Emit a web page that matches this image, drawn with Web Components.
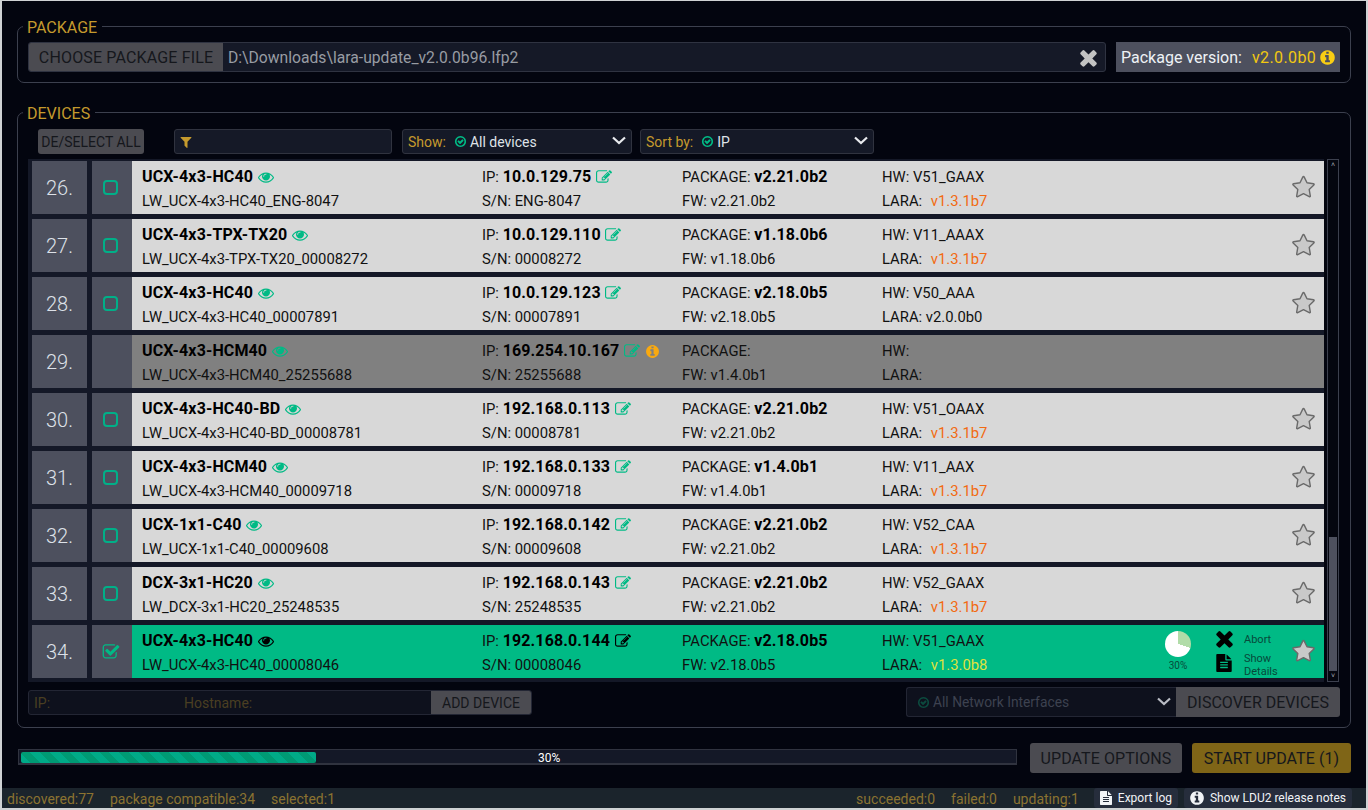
<!DOCTYPE html>
<html>
<head>
<meta charset="utf-8">
<title>LDU2</title>
<style>
html,body{margin:0;padding:0;height:100%;background:#cfd2d4;overflow:hidden}
body{font-family:Roboto,"Liberation Sans",sans-serif;font-size:14px;color:#000}
</style>
</head>
<body>
<lw-app>
  <lw-panel label="PACKAGE" slot="package">
    <lw-package-bar path="D:\Downloads\lara-update_v2.0.0b96.lfp2" version="v2.0.0b0"></lw-package-bar>
  </lw-panel>
  <lw-panel label="DEVICES" slot="devices" class="big">
    <lw-toolbar></lw-toolbar>
    <lw-device-list>
      <lw-device n="26." name="UCX-4x3-HC40" host="LW_UCX-4x3-HC40_ENG-8047" ip="10.0.129.75" sn="ENG-8047" pkg="v2.21.0b2" fw="v2.21.0b2" hw="V51_GAAX" lara="v1.3.1b7"></lw-device>
      <lw-device n="27." name="UCX-4x3-TPX-TX20" host="LW_UCX-4x3-TPX-TX20_00008272" ip="10.0.129.110" sn="00008272" pkg="v1.18.0b6" fw="v1.18.0b6" hw="V11_AAAX" lara="v1.3.1b7"></lw-device>
      <lw-device n="28." name="UCX-4x3-HC40" host="LW_UCX-4x3-HC40_00007891" ip="10.0.129.123" sn="00007891" pkg="v2.18.0b5" fw="v2.18.0b5" hw="V50_AAA" lara="v2.0.0b0" lara-ok></lw-device>
      <lw-device n="29." name="UCX-4x3-HCM40" host="LW_UCX-4x3-HCM40_25255688" ip="169.254.10.167" sn="25255688" fw="v1.4.0b1" state="off"></lw-device>
      <lw-device n="30." name="UCX-4x3-HC40-BD" host="LW_UCX-4x3-HC40-BD_00008781" ip="192.168.0.113" sn="00008781" pkg="v2.21.0b2" fw="v2.21.0b2" hw="V51_OAAX" lara="v1.3.1b7"></lw-device>
      <lw-device n="31." name="UCX-4x3-HCM40" host="LW_UCX-4x3-HCM40_00009718" ip="192.168.0.133" sn="00009718" pkg="v1.4.0b1" fw="v1.4.0b1" hw="V11_AAX" lara="v1.3.1b7"></lw-device>
      <lw-device n="32." name="UCX-1x1-C40" host="LW_UCX-1x1-C40_00009608" ip="192.168.0.142" sn="00009608" pkg="v2.21.0b2" fw="v2.21.0b2" hw="V52_CAA" lara="v1.3.1b7"></lw-device>
      <lw-device n="33." name="DCX-3x1-HC20" host="LW_DCX-3x1-HC20_25248535" ip="192.168.0.143" sn="25248535" pkg="v2.21.0b2" fw="v2.21.0b2" hw="V52_GAAX" lara="v1.3.1b7"></lw-device>
      <lw-device n="34." name="UCX-4x3-HC40" host="LW_UCX-4x3-HC40_00008046" ip="192.168.0.144" sn="00008046" pkg="v2.18.0b5" fw="v2.18.0b5" hw="V51_GAAX" lara="v1.3.0b8" state="updating"></lw-device>
    </lw-device-list>
    <lw-add-row></lw-add-row>
  </lw-panel>
  <lw-update-bar slot="update" percent="30"></lw-update-bar>
  <lw-status slot="status"></lw-status>
</lw-app>

<script>
const ICONS = {
  times: 'M1490 1322q0 40-28 68l-136 136q-28 28-68 28t-68-28l-294-294-294 294q-28 28-68 28t-68-28l-136-136q-28-28-28-68t28-68l294-294-294-294q-28-28-28-68t28-68l136-136q28-28 68-28t68 28l294 294 294-294q28-28 68-28t68 28l136 136q28 28 28 68t-28 68l-294 294 294 294q28 28 28 68z',
  info: 'M1152 1376v-160q0-14-9-23t-23-9h-96v-512q0-14-9-23t-23-9h-320q-14 0-23 9t-9 23v160q0 14 9 23t23 9h96v320h-96q-14 0-23 9t-9 23v160q0 14 9 23t23 9h448q14 0 23-9t9-23zm-128-896v-160q0-14-9-23t-23-9h-192q-14 0-23 9t-9 23v160q0 14 9 23t23 9h192q14 0 23-9t9-23zm640 416q0 209-103 385.5t-279.5 279.5-385.5 103-385.5-103-279.5-279.5-103-385.5 103-385.5 279.5-279.5 385.5-103 385.5 103 279.5 279.5 103 385.5z',
  eye: 'M1664 960q-152-236-381-353 61 104 61 225 0 185-131.5 316.5t-316.5 131.5-316.5-131.5-131.5-316.5q0-121 61-225-229 117-381 353 133 205 333.5 326.5t434.5 121.5 434.5-121.5 333.5-326.5zm-720-384q0-20-14-34t-34-14q-125 0-214.5 89.5t-89.5 214.5q0 20 14 34t34 14 34-14 14-34q0-86 61-147t147-61q20 0 34-14t14-34zm848 384q0 34-20 69-140 230-376.5 368.5t-499.5 138.5-499.5-139-376.5-368q-20-35-20-69t20-69q140-229 376.5-368t499.5-139 499.5 139 376.5 368q20 35 20 69z',
  edit: 'M888 1184l116-116-152-152-116 116v56h96v96h56zm440-720q-16-16-33 1l-350 350q-17 17-1 33t33-1l350-350q17-17 1-33zm80 594v190q0 119-84.5 203.5t-203.5 84.5h-832q-119 0-203.5-84.5t-84.5-203.5v-832q0-119 84.5-203.5t203.5-84.5h832q63 0 117 25 15 7 18 23 3 17-9 29l-49 49q-14 14-32 8-23-6-45-6h-832q-66 0-113 47t-47 113v832q0 66 47 113t113 47h832q66 0 113-47t47-113v-126q0-13 9-22l64-64q15-15 35-7t20 29zm-96-738l288 288-672 672h-288v-288zm444 132l-92 92-288-288 92-92q28-28 68-28t68 28l152 152q28 28 28 68t-28 68z',
  checked: 'M1472 930v318q0 119-84.5 203.5t-203.5 84.5h-832q-119 0-203.5-84.5t-84.5-203.5v-832q0-119 84.5-203.5t203.5-84.5h832q63 0 117 25 15 7 18 23 3 17-9 29l-49 49q-10 10-23 10-3 0-9-2-23-6-45-6h-832q-66 0-113 47t-47 113v832q0 66 47 113t113 47h832q66 0 113-47t47-113v-254q0-13 9-22l64-64q10-10 23-10 6 0 12 3 20 8 20 29zm231-489l-814 814q-24 24-57 24t-57-24l-430-430q-24-24-24-57t24-57l110-110q24-24 57-24t57 24l263 263 647-647q24-24 57-24t57 24l110 110q24 24 24 57t-24 57z',
  star: 'M1728 647q0 22-26 48l-363 354 86 500q1 7 1 20 0 21-10.5 35.5t-30.5 14.5q-19 0-40-12l-449-236-449 236q-22 12-40 12-21 0-31.5-14.5t-10.5-35.5q0-6 2-20l86-500-364-354q-25-27-25-48 0-37 56-46l502-73 225-455q19-41 49-41t49 41l225 455 502 73q56 9 56 46z',
  file: 'M1596 476q14 14 28 36h-472v-472q22 14 36 28zm-476 164h544v1056q0 40-28 68t-68 28h-1344q-40 0-68-28t-28-68v-1600q0-40 28-68t68-28h800v544q0 40 28 68t68 28zm160 736v-64q0-14-9-23t-23-9h-704q-14 0-23 9t-9 23v64q0 14 9 23t23 9h704q14 0 23-9t9-23zm0-256v-64q0-14-9-23t-23-9h-704q-14 0-23 9t-9 23v64q0 14 9 23t23 9h704q14 0 23-9t9-23zm0-256v-64q0-14-9-23t-23-9h-704q-14 0-23 9t-9 23v64q0 14 9 23t23 9h704q14 0 23-9t9-23z',
  filter: 'M1595 295q17 41-14 70l-493 493v742q0 42-39 59-13 5-25 5-27 0-45-19l-256-256q-19-19-19-45v-486l-493-493q-31-29-14-70 17-39 59-39h1280q42 0 59 39z',
  okcircle: 'M1299 813l-422 422q-19 19-45 19t-45-19l-294-294q-19-19-19-45t19-45l102-102q19-19 45-19t45 19l147 147 275-275q19-19 45-19t45 19l102 102q19 19 19 45t-19 45zm141 83q0-148-73-273t-198-198-273-73-273 73-198 198-73 273 73 273 198 198 273 73 273-73 198-198 73-273zm224 0q0 209-103 385.5t-279.5 279.5-385.5 103-385.5-103-279.5-279.5-103-385.5 103-385.5 279.5-279.5 385.5-103 385.5 103 279.5 279.5 103 385.5z'
};

// every element below follows the same shape: a style + markup string in an open shadow root
class LwElement extends HTMLElement {
  constructor() {
    super();
    this.attachShadow({ mode: 'open' });
  }
  connectedCallback() {
    this.shadowRoot.innerHTML = this.render();
  }
  attr(name) {
    return this.getAttribute(name) || '';
  }
}

class LwIcon extends LwElement {
  render() {
    const size = this.attr('size') || 16;
    return `<style>
      :host{display:inline-flex;width:${size}px;height:${size}px;vertical-align:middle;flex:none}
      svg{width:100%;height:100%;display:block;overflow:visible}
      path{fill:currentColor}
    </style>
    <svg viewBox="0 0 1792 1792"><path d="${ICONS[this.attr('name')]}"/></svg>`;
  }
}

class LwButton extends LwElement {
  render() {
    return `<style>
      :host{display:inline-flex;align-items:center;justify-content:center;box-sizing:border-box;
        height:var(--h,30px);padding:0 var(--px,10px);background:var(--bg,#4b4b51);color:#111;
        font-size:var(--fs,16px);border-radius:var(--r,3px);white-space:nowrap;flex:none}
    </style><slot></slot>`;
  }
}

class LwPanel extends LwElement {
  render() {
    return `<style>
      :host{display:block}
      fieldset{margin:0;padding:7px 10px 10px;border:1px solid #3c404e;border-radius:7px;min-width:0}
      legend{padding:0 5px 0 4px;margin-left:-5px;color:#c59a2d;font-size:16px;line-height:18px;position:relative;top:2px}
    </style>
    <fieldset><legend>${this.attr('label')}</legend><slot></slot></fieldset>`;
  }
}

class LwPackageBar extends LwElement {
  render() {
    return `<style>
      :host{display:flex;height:30px}
      .file{width:1078px;display:flex;box-sizing:border-box;background:#151927;border:1px solid #2f3341;border-radius:3px;overflow:hidden;flex:none}
      lw-button{--h:28px;--r:0;--px:0;width:194px;color:#15171c;letter-spacing:.15px}
      .path{flex:1;padding-left:5px;line-height:30px;font-size:15.7px;color:#989ca3}
      .clear{width:33px;display:flex;align-items:center;justify-content:center;color:#c3c3c3}
      .ver{margin-left:10px;flex:1;background:#4d505e;display:flex;align-items:center;padding-left:5px;font-size:16px;color:#eef2f6}
      .ver b{font-weight:400;color:#f2c811;margin-left:10px;margin-right:3px;letter-spacing:.4px}
      .ver lw-icon{color:#f9ce14}
    </style>
    <div class="file"><lw-button>CHOOSE PACKAGE FILE</lw-button>
      <div class="path">${this.attr('path')}</div>
      <div class="clear"><lw-icon name="times" size="25"></lw-icon></div></div>
    <div class="ver">Package version: <b>${this.attr('version')}</b><lw-icon name="info" size="17"></lw-icon></div>`;
  }
}

class LwSelect extends LwElement {
  render() {
    const label = this.attr('label');
    return `<style>
      :host{display:flex;align-items:center;box-sizing:border-box;height:25px;border:1px solid #30333f;border-radius:3px;
        background:#151927;padding:0 5px 0 5px;font-size:14px;color:#dfe3e8;flex:none}
      .l{color:#c59a2d;font-size:14px;margin-right:8px}
      lw-icon{color:#00ba85;margin-right:3px}
      .t{flex:1}
      svg{width:14px;height:9px;fill:none;stroke:#e8eaee;stroke-width:2.2;margin-top:-2px}
    </style>
    ${label ? `<span class="l">${label}</span>` : ''}<lw-icon name="okcircle" size="13"></lw-icon>
    <span class="t"><slot></slot></span>
    <svg viewBox="0 0 14 9"><path d="M1 1.5l6 5.5 6-5.5"/></svg>`;
  }
}

class LwToolbar extends LwElement {
  render() {
    return `<style>
      :host{display:flex;height:25px;margin:1px 0 5px;padding-left:10px}
      lw-button{--h:25px;--px:0;--fs:14px;width:106px;color:#15171c}
      .filter{width:218px;margin:0 10px 0 30px;box-sizing:border-box;height:25px;background:#151927;border:1px solid #30333f;border-radius:3px;
        display:flex;align-items:center;padding-left:4px;color:#c59a2d;flex:none}
      .show{width:230px;margin-right:8px}
      .sort{width:234px}
    </style>
    <lw-button>DE/SELECT ALL</lw-button>
    <div class="filter"><lw-icon name="filter" size="14"></lw-icon></div>
    <lw-select class="show" label="Show:">All devices</lw-select>
    <lw-select class="sort" label="Sort by:">IP</lw-select>`;
  }
}

class LwDeviceList extends LwElement {
  render() {
    return `<style>
      :host{display:flex;height:523px}
      .rows{width:1296px;box-sizing:border-box;background:#141827;padding:2px 0 3px 4px;display:flex;flex-direction:column;gap:5px;flex:none}
      .bar{width:12px;margin-left:3px;box-sizing:border-box;border:1px solid #3c404e;background:#04060f;position:relative;flex:none;
        display:flex;flex-direction:column;justify-content:space-between;align-items:center}
      .bar i{font-style:normal;font-size:7px;line-height:10px;color:#a8acb6}
      .thumb{position:absolute;left:1px;right:1px;bottom:10px;height:134px;background:#4d505e}
    </style>
    <div class="rows"><slot></slot></div>
    <div class="bar"><i>&#708;</i><div class="thumb"></div><i>&#709;</i></div>`;
  }
}

class LwDevice extends LwElement {
  render() {
    const state = this.attr('state');
    const off = state === 'off';
    const upd = state === 'updating';
    const accent = upd ? '#000' : '#00ba85';
    const pkg = this.attr('pkg');
    const lara = this.attr('lara');
    const laraCls = this.hasAttribute('lara-ok') ? 'plain' : upd ? 'yel' : 'old';
    return `<style>
      :host{display:flex;height:53px;flex:none}
      .num{width:55px;background:#4d505e;color:#dde1e8;font-size:20px;font-weight:300;display:flex;align-items:center;justify-content:center;margin-right:5px;flex:none}
      .chk{width:40px;background:#4d505e;display:flex;align-items:center;justify-content:center;flex:none;color:#00ba85;padding-right:3px;box-sizing:border-box}
      .box{width:15px;height:15px;box-sizing:border-box;border:2px solid #00b088;border-radius:4px}
      .main{flex:1;display:grid;grid-template-columns:340px 200px 200px 1fr;grid-template-rows:24px 24px;align-content:center;padding:2px 0 0 10px;
        background:${off ? '#808080' : upd ? '#00ba85' : '#d8d8d8'};position:relative;line-height:24px;white-space:nowrap;color:#111;font-size:14.8px}
      b{font-weight:700;font-size:16px;letter-spacing:.13px;color:#000}
      lw-icon.a{color:${accent};margin-left:1px;position:relative;top:-1px}
      .old{color:#f26a12;margin-left:5px}
      .yel{color:#dfe23f;margin-left:5px}
      .plain{margin-left:0}
      .side{position:absolute;right:9px;top:0;bottom:0;display:flex;align-items:center}
      .star{width:23px;height:23px;display:block;overflow:visible}
      .star path{fill:#c9c9c9;stroke:#6a6a6a;stroke-width:110;stroke-linejoin:round}
      .prog{display:flex;align-items:center;color:#07493a;font-size:11px;line-height:13px}
      .pie{width:56px;margin-right:9px;display:flex;flex-direction:column;align-items:center;font-size:10px;line-height:12px}
      .pie i{display:block;width:26px;height:26px;border-radius:50%;margin-bottom:3px;background:conic-gradient(#b1dca8 0 30%,#fff 30% 100%)}
      .acts{display:grid;grid-template-columns:29px 48px;grid-template-rows:25px 25px;align-items:center;white-space:normal;margin-top:-2px}
      .acts lw-icon{color:#000}
      .acts .x{margin-left:-3.5px}
      .acts span{padding-top:3px}
    </style>
    <div class="num">${this.attr('n')}</div>
    <div class="chk">${off ? '' : upd ? '<lw-icon name="checked" size="18"></lw-icon>' : '<div class="box"></div>'}</div>
    <div class="main">
      <div><b>${this.attr('name')}</b> <lw-icon class="a" name="eye" size="16"></lw-icon></div>
      <div>IP: <b>${this.attr('ip')}</b> <lw-icon class="a" name="edit" size="16"></lw-icon>${off ? '<lw-icon name="info" size="15" style="color:#f9a90f;margin-left:5px"></lw-icon>' : ''}</div>
      <div>PACKAGE: ${pkg ? `<b>${pkg}</b>` : ''}</div>
      <div>HW: ${this.attr('hw')}</div>
      <div>${this.attr('host')}</div>
      <div>S/N: ${this.attr('sn')}</div>
      <div>FW: ${this.attr('fw')}</div>
      <div>LARA: ${lara ? `<span class="${laraCls}">${lara}</span>` : ''}</div>
      <div class="side">
        ${upd ? `<div class="prog"><div class="pie"><i></i>30%</div>
          <div class="acts"><lw-icon class="x" name="times" size="25"></lw-icon><span>Abort</span>
          <lw-icon name="file" size="18"></lw-icon><span>Show Details</span></div></div>` : ''}
        ${off ? '' : `<svg class="star" viewBox="0 0 1792 1792"><path d="${ICONS.star}"/></svg>`}
      </div>
    </div>`;
  }
}

class LwAddRow extends LwElement {
  render() {
    return `<style>
      :host{display:flex;align-items:center;justify-content:space-between;height:30px;margin-top:5px}
      .add{display:flex;width:504px;height:25px;box-sizing:border-box;background:#0e111d;border:1px solid #232634;border-radius:3px;overflow:hidden;color:#4a3f22}
      .add span{line-height:25px;font-size:14px}
      .ip{width:150px;padding-left:5px}
      .host{flex:1}
      .add lw-button{--h:23px;--fs:14px;--r:0;--px:0;width:100px;color:#15171c;padding-top:1px}
      .disc{display:flex;height:30px}
      .sel{display:flex;align-items:center;width:270px;box-sizing:border-box;background:#0e111d;border:1px solid #232634;border-right:0;border-radius:3px 0 0 3px;
        padding:0 5px 0 10px;color:#3d4250;font-size:13.8px}
      .sel lw-icon{color:#0c4a3e;margin-right:3px}
      .sel span{flex:1}
      .sel svg{width:14px;height:9px;fill:none;stroke:#b9bcc4;stroke-width:2.2;margin-top:-2px}
      .disc lw-button{--px:0;width:164px;--r:0 3px 3px 0;color:#15171c}
    </style>
    <div class="add"><span class="ip">IP:</span><span class="host">Hostname:</span><lw-button>ADD DEVICE</lw-button></div>
    <div class="disc"><div class="sel"><lw-icon name="okcircle" size="13"></lw-icon><span>All Network Interfaces</span>
      <svg viewBox="0 0 14 9"><path d="M1 1.5l6 5.5 6-5.5"/></svg></div>
      <lw-button>DISCOVER DEVICES</lw-button></div>`;
  }
}

class LwUpdateBar extends LwElement {
  render() {
    const p = this.attr('percent');
    return `<style>
      :host{display:flex;align-items:center;height:30px}
      .track{width:999px;height:16px;box-sizing:border-box;border:1px solid #30333f;border-bottom-width:2px;background:#141827;position:relative;padding:2px 2px 0;flex:none;margin-bottom:2px}
      .fill{width:${p * 0.99}%;height:11px;border-radius:2px;
        background:repeating-linear-gradient(45deg,#00aa88 0 7px,#009a74 7px 14px)}
      .lbl{position:absolute;left:519px;top:1px;color:#fff;font-size:12px;line-height:14px}
      lw-button.o{margin-left:13px;width:152px;--px:0;color:#15171c;letter-spacing:.08px}
      lw-button.s{margin-left:10px;width:159px;--px:0;--bg:#7f6517;color:#15171c;letter-spacing:.08px}
    </style>
    <div class="track"><div class="fill"></div><div class="lbl">${p}%</div></div>
    <lw-button class="o">UPDATE OPTIONS</lw-button>
    <lw-button class="s">START UPDATE (1)</lw-button>`;
  }
}

class LwStatus extends LwElement {
  render() {
    return `<style>
      :host{display:flex;align-items:center;box-sizing:border-box;height:20px;background:#1b242c;color:#8b7331;font-size:14px;padding:0 14px 0 5px;white-space:nowrap}
      span{margin-right:16px;padding-top:2px}
      .sp{flex:1}
      .b{display:flex;align-items:center;height:20px;background:#262d3c;color:#f1f3f6;font-size:12px;border-radius:3px;padding:0 6px 0 5px;margin-left:6px}
      .b lw-icon{margin-right:5px}
    </style>
    <span>discovered:77</span><span>package compatible:34</span><span>selected:1</span>
    <div class="sp"></div>
    <span>succeeded:0</span><span>failed:0</span><span style="margin-right:15px">updating:1</span>
    <div class="b" style="margin-left:0"><lw-icon name="file" size="14"></lw-icon>Export log</div>
    <div class="b"><lw-icon name="info" size="16"></lw-icon>Show LDU2 release notes</div>`;
  }
}

class LwApp extends LwElement {
  render() {
    return `<style>
      :host{display:flex;flex-direction:column;box-sizing:border-box;position:absolute;left:2px;top:1px;right:2px;bottom:2px;background:#03050f}
      .top{padding:16px 15px 0;flex:1;display:flex;flex-direction:column}
      .gap{height:20px}
      .up{padding:15px 0 0 1px}
    </style>
    <div class="top">
      <slot name="package"></slot>
      <div class="gap"></div>
      <slot name="devices"></slot>
      <div class="up"><slot name="update"></slot></div>
    </div>
    <slot name="status"></slot>`;
  }
}

customElements.define('lw-icon', LwIcon);
customElements.define('lw-button', LwButton);
customElements.define('lw-panel', LwPanel);
customElements.define('lw-package-bar', LwPackageBar);
customElements.define('lw-select', LwSelect);
customElements.define('lw-toolbar', LwToolbar);
customElements.define('lw-device-list', LwDeviceList);
customElements.define('lw-device', LwDevice);
customElements.define('lw-add-row', LwAddRow);
customElements.define('lw-update-bar', LwUpdateBar);
customElements.define('lw-status', LwStatus);
customElements.define('lw-app', LwApp);
</script>
</body>
</html>
